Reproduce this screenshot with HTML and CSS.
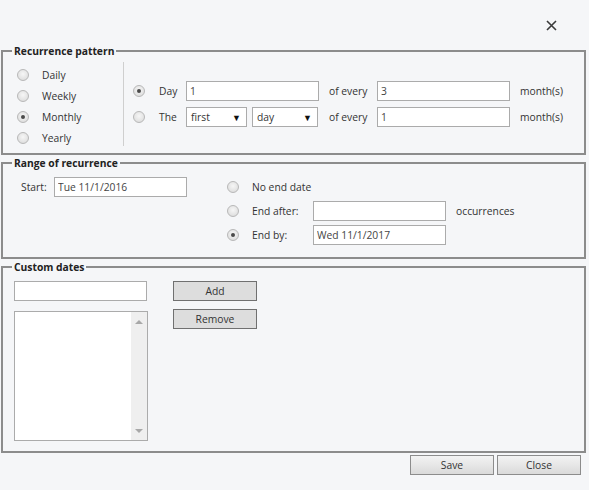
FILE: index.html
```html
<!DOCTYPE html>
<html>
<head>
<meta charset="utf-8">
<link rel="stylesheet" href="styles.css">
</head>
<body>
<div class="dialog">
  <div class="topbar">
    <span class="close-x" aria-label="Close">
      <svg width="11" height="11" viewBox="0 0 11 11"><path d="M1 1L10 10M10 1L1 10" stroke="#3a3a3a" stroke-width="1.6" fill="none"/></svg>
    </span>
  </div>

  <fieldset class="group pattern">
    <legend>Recurrence pattern</legend>
    <div class="pattern-body">
      <div class="freq">
        <div class="opt"><span class="radio"></span><span>Daily</span></div>
        <div class="opt"><span class="radio"></span><span>Weekly</span></div>
        <div class="opt"><span class="radio on"></span><span>Monthly</span></div>
        <div class="opt"><span class="radio"></span><span>Yearly</span></div>
      </div>
      <div class="monthly">
        <div class="mgrid">
          <span class="radio on"></span>
          <span>Day</span>
          <input class="field" type="text" value="1">
          <span class="pad">of every</span>
          <input class="field" type="text" value="3">
          <span class="pad">month(s)</span>

          <span class="radio"></span>
          <span>The</span>
          <div class="selects">
            <div class="select sel-first"><span>first</span><span class="arrow">▼</span></div>
            <div class="select sel-day"><span>day</span><span class="arrow">▼</span></div>
          </div>
          <span class="pad">of every</span>
          <input class="field" type="text" value="1">
          <span class="pad">month(s)</span>
        </div>
      </div>
    </div>
  </fieldset>

  <fieldset class="group range">
    <legend>Range of recurrence</legend>
    <div class="rgrid">
      <span class="start-lbl">Start:</span>
      <input class="field" type="text" value="Tue 11/1/2016">
      <span></span>
      <span class="radio"></span>
      <span class="wide">No end date</span>

      <span></span><span></span><span></span>
      <span class="radio"></span>
      <span>End after:</span>
      <input class="field" type="text" value="">
      <span class="pad">occurrences</span>

      <span></span><span></span><span></span>
      <span class="radio on"></span>
      <span>End by:</span>
      <input class="field" type="text" value="Wed 11/1/2017">
      <span></span>
    </div>
  </fieldset>

  <fieldset class="group custom">
    <legend>Custom dates</legend>
    <div class="custom-body">
      <div class="custom-left">
        <input class="field" type="text" value="">
        <div class="listbox">
          <div class="list-items"></div>
          <div class="scrollbar">
            <span class="tri up"></span>
            <span class="tri down"></span>
          </div>
        </div>
      </div>
      <div class="custom-btns">
        <button class="flat-btn">Add</button>
        <button class="flat-btn">Remove</button>
      </div>
    </div>
  </fieldset>

  <div class="footer">
    <button class="btn">Save</button>
    <button class="btn">Close</button>
  </div>
</div>
</body>
</html>
```

FILE: styles.css
```css
* { box-sizing: border-box; }

html, body {
  margin: 0;
  padding: 0;
}

body {
  width: 589px;
  height: 490px;
  overflow: hidden;
  background: #f5f6f8;
  font-family: "Open Sans", "Noto Sans", sans-serif;
  font-size: 10.3px;
  color: #333;
}

.dialog {
  padding: 0 3px 0 1px;
}

.topbar {
  height: 44px;
  display: flex;
  justify-content: flex-end;
  align-items: flex-start;
  padding: 20px 29px 0 0;
}

.close-x {
  display: block;
  width: 11px;
  height: 11px;
}
.close-x svg { display: block; }

.group {
  margin: 0 0 1px 0;
  padding: 0;
  border: 2px solid #8c8c8c;
  min-width: 0;
}

.group legend {
  margin-left: 9px;
  padding: 0 2px;
  font-weight: bold;
  font-size: 10.3px;
  line-height: 14px;
  color: #222;
}

/* radios */
.radio {
  display: inline-block;
  width: 12px;
  height: 12px;
  border-radius: 50%;
  border: 1px solid #b8b8b8;
  background: radial-gradient(circle at 50% 40%, #f6f6f6 0%, #e4e4e4 60%, #d4d4d4 100%);
  position: relative;
  flex: none;
}
.radio.on::after {
  content: "";
  position: absolute;
  left: 3px;
  top: 3px;
  width: 4px;
  height: 4px;
  border-radius: 50%;
  background: #4a4a4a;
}

/* inputs */
.field {
  width: 133px;
  height: 20px;
  margin: 0;
  padding: 0 3px;
  border: 1px solid #ababab;
  background: #fff;
  font-family: inherit;
  font-size: 10.3px;
  color: #444;
  outline: none;
}

/* pattern */
.pattern-body {
  display: flex;
  padding: 4px 0 5px 0;
}

.freq {
  width: 120px;
  padding: 2px 0 0 14px;
}

.opt {
  display: flex;
  align-items: center;
  height: 21px;
}
.opt .radio { margin-right: 13px; }

.monthly {
  height: 84px;
  border-left: 1px solid #cfcfcf;
  padding-left: 9px;
  display: flex;
  align-items: center;
}

.mgrid {
  display: grid;
  grid-template-columns: 26px 27px 133px 58px 133px auto;
  grid-auto-rows: 20px;
  row-gap: 6px;
  align-items: center;
}

.pad { padding-left: 10px; }

.selects {
  display: flex;
  gap: 5px;
  height: 20px;
}

.select {
  display: flex;
  align-items: center;
  justify-content: space-between;
  height: 20px;
  padding: 0 5px 0 4px;
  border: 1px solid #ababab;
  background: #fff;
  color: #333;
}
.sel-first { width: 61px; }
.sel-day { width: 66px; }
.select .arrow {
  font-size: 9px;
  color: #111;
}

/* range */
.rgrid {
  display: grid;
  grid-template-columns: 33px 133px 40px 25px 61px 133px auto;
  grid-template-rows: 20px 20px 20px;
  row-gap: 4px;
  align-items: center;
  padding: 7px 0 12px 18px;
  white-space: nowrap;
}
.rgrid .wide { grid-column: 5 / 8; }

/* custom */
.custom-body {
  display: flex;
  padding: 7px 0 10px 11px;
}

.custom-left {
  display: flex;
  flex-direction: column;
  gap: 10px;
  width: 134px;
}

.listbox {
  display: flex;
  width: 134px;
  height: 130px;
  border: 1px solid #ababab;
  background: #fff;
}
.list-items { flex: 1; }

.scrollbar {
  width: 16px;
  background: #efefef;
  display: flex;
  flex-direction: column;
  justify-content: space-between;
  align-items: center;
  padding: 8px 0 7px;
}

.tri {
  width: 0;
  height: 0;
  border-left: 4px solid transparent;
  border-right: 4px solid transparent;
}
.tri.up { border-bottom: 4px solid #a8a8a8; }
.tri.down { border-top: 4px solid #a8a8a8; }

.custom-btns {
  display: flex;
  flex-direction: column;
  gap: 8px;
  margin-left: 25px;
}

.flat-btn {
  width: 84px;
  height: 20px;
  margin: 0;
  padding: 0;
  border: 1px solid #707070;
  background: #dddddd;
  font-family: inherit;
  font-size: 10.3px;
  color: #333;
}

/* footer */
.footer {
  display: flex;
  justify-content: flex-end;
  gap: 3px;
  padding: 1px 5px 0 0;
}

.btn {
  width: 84px;
  height: 20px;
  margin: 0;
  padding: 0;
  border: 1px solid #8c8c8c;
  background: linear-gradient(#f3f3f3, #dadada);
  font-family: inherit;
  font-size: 10.3px;
  color: #333;
}
```
